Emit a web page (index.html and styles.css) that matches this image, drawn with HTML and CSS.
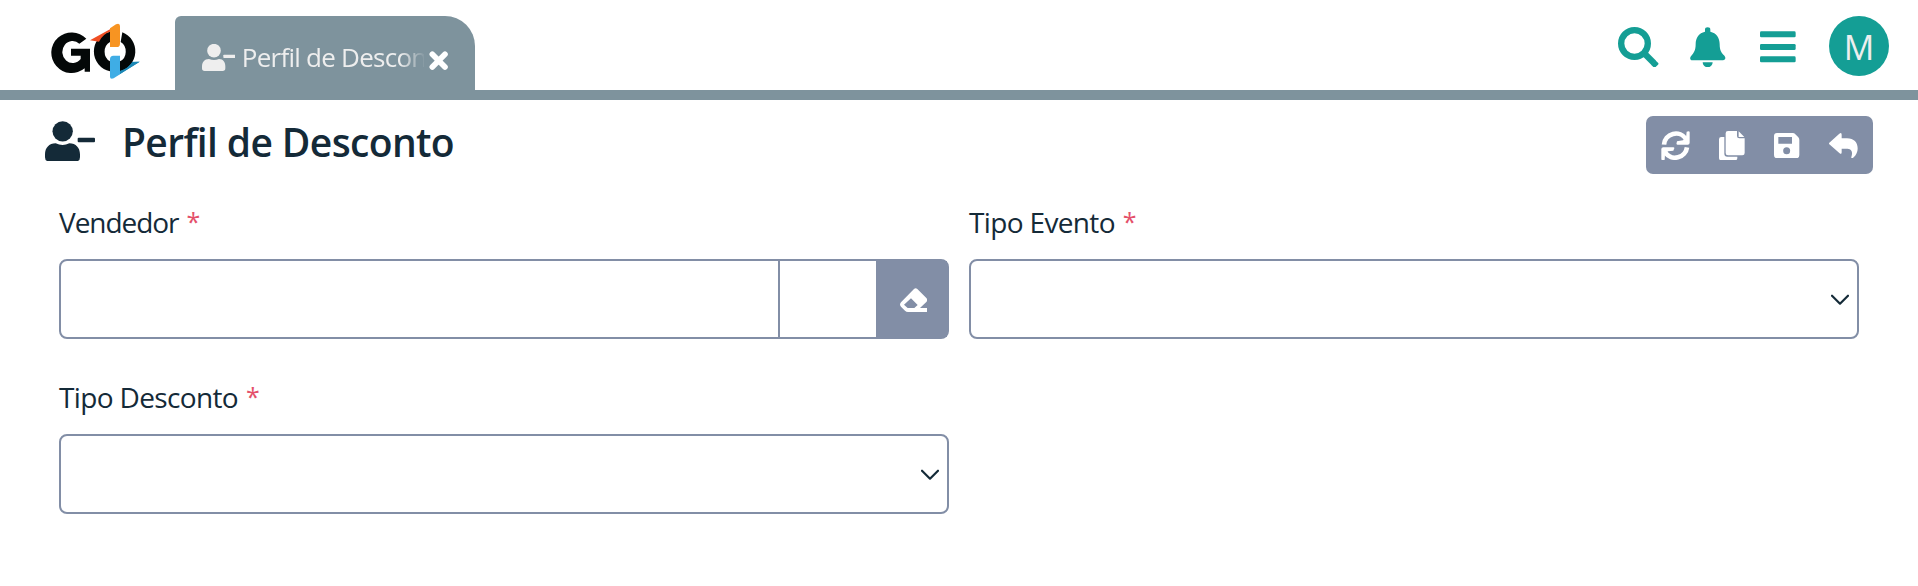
FILE: index.html
```
<!DOCTYPE html>
<html lang="pt-BR">
<head>
<meta charset="utf-8">
<title>Perfil de Desconto</title>
<link rel="stylesheet" href="styles.css">
</head>
<body>
<header class="topbar">
  <svg class="logo" viewBox="60 70 270 168" aria-label="GO">
    <path class="logo-ink" d="M169 117 148 132A31 33 0 1 0 152 178V168H123V147H180V216H164V206A61 61 0 1 1 169 117Z"/>
    <path class="logo-teal" d="M270 204 288 187 329 186 269 224Z"/>
    <path class="logo-ink" d="M240 96V127A31 33 0 0 0 240 185V215A62 61 0 0 1 240 96ZM277 98A61 61 0 0 1 270 214V185A31 33 0 0 0 272 127Z"/>
    <path class="logo-red" d="M180 122 240 89V96Q218 103 207 126Z"/>
    <path class="logo-teal" d="M270 214Q294 207 307 187L329 186 269 224Z"/>
    <path class="logo-orange" d="M240 86 258 74Q270 69 270 80V132Q270 142 260 142H240Z"/>
    <path class="logo-blue" d="M240 179Q240 168 250 168H270V224L251 236Q240 240 240 231Z"/>
  </svg>
  <div class="tab">
    <svg class="tab-user" viewBox="516 132 100 81"><circle cx="552" cy="152" r="20.500"/><path d="M537 177Q552 183 567 177C580 177 586 187 586 199V205Q586 213 578 213H524Q516 213 516 205V199C516 187 523 177 537 177Z"/><rect x="580" y="164" width="36" height="10" rx="2"/></svg>
    <span class="tab-title">Perfil de Desconto</span>
    <svg class="tab-close" viewBox="506 155 58 58"><path d="M516 165 554 203M554 165 516 203"/></svg>
  </div>
  <nav class="actions">
    <svg class="ico-search" viewBox="83 80 122 122"><circle cx="132.500" cy="129.500" r="40"/><path class="handle" d="M160 157 190 187"/><path class="handle-end" d="M182 193 195 180 203 187Q206 190 203 193L196 200Q193 203 189 200Z"/></svg>
    <svg class="ico-bell" viewBox="301 80 106 122"><path d="M346 88Q346 81 354 81T362 88V94C380 98 390 112 390 131C390 151 396 158 403 165C410 172 407 180 400 180H308C301 180 299 172 305 166C312 158 318 151 318 131C318 112 328 98 346 94ZM339 186H369C368 206 340 206 339 186Z"/></svg>
    <svg class="ico-bars" viewBox="510 93 107 96"><rect x="510" y="94" width="107" height="18" rx="4"/><rect x="510" y="132" width="107" height="18" rx="4"/><rect x="510" y="169" width="107" height="18" rx="4"/></svg>
    <div class="avatar">M</div>
  </nav>
</header>
<main>
  <div class="heading">
    <svg class="page-user" viewBox="45 47 150 121"><circle cx="98" cy="78" r="30.500"/><path d="M77 114Q98 124 118 114C138 114 150 128 150 147V156Q150 168 138 168H57Q45 168 45 156V147C45 128 57 114 77 114Z"/><rect x="143" y="97" width="52" height="14" rx="3"/></svg>
    <h1>Perfil de Desconto</h1>
    <div class="toolbar">
      <svg class="t-refresh" viewBox="94 77 87 88"><path class="line" d="M103 118A36 36 0 0 1 169 101M172 126A36 36 0 0 1 107 142"/><path d="M171 79Q180 76 180 81V112Q180 118 174 118H144Q139 118 141 112L142 108 160 105 169 97ZM95 131Q95 126 101 126H131Q136 126 133 131L131 136 115 138 106 147 105 163Q95 168 95 160Z"/></svg>
      <svg class="t-copy" viewBox="269 77 77 88"><path d="M296 77H323V92Q323 99 330 99H346V143Q346 150 339 150H296Q289 150 289 143V84Q289 77 296 77ZM328 78 345 95H328ZM276 95H285V145Q285 154 294 154H324V158Q324 165 317 165H276Q269 165 269 158V102Q269 95 276 95Z"/></svg>
      <svg class="t-save" viewBox="432 83 76 76"><path fill-rule="evenodd" d="M441 83H488Q493 83 496 87L505 96Q508 99 508 104V149Q508 159 498 159H442Q432 159 432 149V92Q432 83 441 83ZM445 95V115H486V95ZM470 126A10.500 10.500 0 1 0 470 147A10.500 10.500 0 1 0 470 126Z"/></svg>
      <svg class="t-reply" viewBox="596 83 87 76"><path d="M597 112 627 85Q634 80 634 88V99H650C671 99 682 112 682 129C682 145 673 154 668 158Q662 161 663 155C669 137 662 130 648 130H634V141Q634 149 627 143L597 117Q595 114 597 112Z"/></svg>
    </div>
  </div>
  <form class="form">
    <div class="field">
      <label><span class="narrow">Vendedor</span><i>*</i></label>
      <div class="control group">
        <div class="group-text"></div>
        <div class="group-code"></div>
        <div class="group-clear"><svg class="t-eraser" viewBox="420 264 82 72"><path fill-rule="evenodd" d="M423 307 462 267Q467 262 472 267L499 294Q504 300 499 306L480 324H501V336H444Q439 336 435 332L423 320Q417 314 423 307ZM453 295 432 314 443 324H463L473 315Z"/></svg></div>
      </div>
    </div>
    <div class="field">
      <label><span>Tipo Evento</span><i>*</i></label>
      <div class="control select"><svg class="chevron" viewBox="153 160 54 34"><path d="M156 165 180 189 204 165"/></svg></div>
    </div>
    <div class="field">
      <label><span>Tipo Desconto</span><i>*</i></label>
      <div class="control select"><svg class="chevron" viewBox="153 160 54 34"><path d="M156 165 180 189 204 165"/></svg></div>
    </div>
  </form>
</main>
</body>
</html>
```
FILE: styles.css
```
* { box-sizing: border-box; }
body { margin: 0; background: #fff; color: #142a38; font-family: "Segoe UI", "Open Sans", "Noto Sans", sans-serif; overflow: hidden; }
svg { display: block; flex: none; }

.topbar { height: 100px; border-bottom: 10px solid #7e939d; display: flex; align-items: flex-start; padding: 16px 29px 0 50px; }
.logo { width: 90px; height: 56px; margin: 7.300px 35px 0 0; }
.logo-ink { fill: #040808; }
.logo-red { fill: #f04e23; }
.logo-teal { fill: #1b87b5; }
.logo-orange { fill: #f79422; }
.logo-blue { fill: #3fade5; }

.tab { width: 300px; height: 74px; background: #7e939d; border-radius: 6px 30px 0 0; display: flex; align-items: flex-start; padding-left: 27px; color: #eee; }
.tab-user { width: 33.330px; height: 27px; margin-top: 28px; fill: #eee; }
.tab-title { width: 182px; margin: 23px 0 0 6.500px; font-size: 26px; line-height: 36px; letter-spacing: -.75px; white-space: nowrap; overflow: hidden; -webkit-mask-image: linear-gradient(90deg, #000 158px, transparent 184px); mask-image: linear-gradient(90deg, #000 158px, transparent 184px); }
.tab-close { width: 19.300px; height: 19.300px; margin: 35.400px 0 0 5px; fill: none; stroke: #fff; stroke-width: 17; stroke-linecap: round; }

.actions { margin-left: auto; height: 60px; display: flex; align-items: center; }
.actions svg { fill: #149e95; }
.actions .ico-search { width: 40.670px; height: 40.670px; margin: 2px 31.700px 0 0; }
.ico-search circle, .ico-search .handle { fill: none; stroke: #149e95; stroke-width: 19; }
.ico-bell { width: 35.330px; height: 40.670px; margin: 2px 34.300px 0 0; }
.ico-bars { width: 35.670px; height: 32px; margin: 2px 33.300px 0 0; }
.avatar { width: 60px; height: 60px; border-radius: 50%; background: #149e95; color: #eee; font-size: 34px; line-height: 63px; text-align: center; }

.heading { height: 96px; display: flex; align-items: flex-start; padding: 16px 45px 0; }
.page-user { width: 50px; height: 40.330px; margin-top: 5px; fill: #142a38; }
h1 { margin: 0 0 0 27px; font-size: 39px; line-height: 51px; font-weight: 600; letter-spacing: -.63px; white-space: nowrap; }
.toolbar { width: 227px; height: 58px; margin-left: auto; border-radius: 7px; background: #828ea6; display: flex; align-items: center; padding: 1px 15px 0; justify-content: space-between; }
.toolbar svg { fill: #fff; }
.t-refresh { width: 29px; height: 29.330px; }
.t-refresh .line { fill: none; stroke: #fff; stroke-width: 14; }
.t-copy { width: 25.670px; height: 29.330px; }
.t-save { width: 25.330px; height: 25.330px; }
.t-reply { width: 29px; height: 25.330px; }

.form { display: grid; grid-template-columns: 890px 890px; column-gap: 20px; row-gap: 35px; padding: 7px 59px 0; }
.field { height: 140px; }
.field label { display: flex; height: 56px; line-height: 39px; font-size: 28px; letter-spacing: -.65px; white-space: nowrap; }
.field .narrow { letter-spacing: -1.050px; }
.field i { color: #e4506a; font-size: 25px; font-style: normal; line-height: 36px; margin-left: 8px; }
.control { height: 80px; border: 2px solid #828ea6; border-radius: 8px; background: #fff; display: flex; }
.group-text { flex: 1; }
.group-code { width: 98px; border-left: 2px solid #828ea6; }
.group-clear { width: 71px; background: #828ea6; padding: 27.300px 0 0 24px; }
.t-eraser { width: 27.330px; height: 24px; fill: #fff; }
.select { justify-content: flex-end; align-items: center; padding-right: 8px; }
.chevron { width: 18px; height: 11.330px; margin-top: 1px; fill: none; stroke: #142a38; stroke-width: 6.500; stroke-linecap: round; stroke-linejoin: round; }
```
